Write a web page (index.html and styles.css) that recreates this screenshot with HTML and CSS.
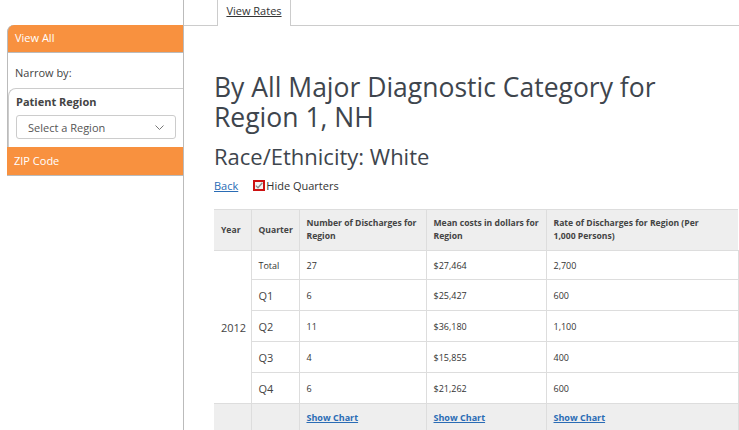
FILE: index.html
```html
<!DOCTYPE html>
<html lang="en">
<head>
<meta charset="utf-8">
<title>View Rates</title>
<link rel="stylesheet" href="styles.css">
</head>
<body>
<div class="page">
  <aside class="sidebar">
    <div class="side-box">
      <div class="bar bar-top">View All</div>
      <div class="narrow">Narrow by:</div>
      <div class="filter">
        <div class="filter-title">Patient Region</div>
        <div class="select">
          <span>Select a Region</span>
          <svg class="chev" width="9" height="5" viewBox="0 0 9 5"><path d="M0.5 0.5 L4.5 4.5 L8.5 0.5" fill="none" stroke="#777" stroke-width="1"/></svg>
        </div>
      </div>
      <div class="bar">ZIP Code</div>
    </div>
  </aside>
  <main class="main">
    <nav class="tabs">
      <a class="tab" href="#">View Rates</a>
    </nav>
    <div class="content">
      <h1>By All Major Diagnostic Category for Region 1, NH</h1>
      <h2>Race/Ethnicity: White</h2>
      <div class="controls">
        <a class="back" href="#">Back</a>
        <label class="hide">
          <span class="check"><svg width="8" height="7" viewBox="0 0 8 7"><path d="M0.8 3.6 L3 5.8 L7.4 0.8" fill="none" stroke="#8a8a8a" stroke-width="1.3"/></svg></span>
          Hide Quarters
        </label>
      </div>
      <table class="rates">
        <colgroup>
          <col class="c-year"><col class="c-q"><col class="c-n"><col class="c-m"><col class="c-r">
        </colgroup>
        <thead>
          <tr>
            <th>Year</th>
            <th>Quarter</th>
            <th>Number of Discharges for Region</th>
            <th>Mean costs in dollars for Region</th>
            <th class="th-rate">Rate of Discharges for Region (Per 1,000 Persons)</th>
          </tr>
        </thead>
        <tbody>
          <tr class="r-total">
            <td class="year" rowspan="5">2012</td>
            <td class="small">Total</td><td>27</td><td>$27,464</td><td>2,700</td>
          </tr>
          <tr><td class="q">Q1</td><td>6</td><td>$25,427</td><td>600</td></tr>
          <tr><td class="q">Q2</td><td>11</td><td>$36,180</td><td>1,100</td></tr>
          <tr><td class="q">Q3</td><td>4</td><td>$15,855</td><td>400</td></tr>
          <tr><td class="q">Q4</td><td>6</td><td>$21,262</td><td>600</td></tr>
          <tr class="charts">
            <td></td><td></td>
            <td><a href="#">Show Chart</a></td>
            <td><a href="#">Show Chart</a></td>
            <td><a href="#">Show Chart</a></td>
          </tr>
        </tbody>
      </table>
    </div>
  </main>
</div>
</body>
</html>
```
FILE: styles.css
```css
* { box-sizing: border-box; }
html, body { margin: 0; padding: 0; }
body {
  font-family: "Open Sans", "Liberation Sans", sans-serif;
  color: #444;
  background: #fff;
  width: 739px;
  height: 430px;
  overflow: hidden;
}
.page {
  display: flex;
  height: 430px;
}
.sidebar {
  width: 184px;
  flex: none;
  padding: 25px 0 0 7px;
  border-right: 1px solid #bbb;
}
.side-box {
  border-top: 1px solid #bbb;
  border-left: 1px solid #bbb;
  border-top-left-radius: 7px;
}
.bar {
  background: #f8913f;
  color: #fff;
  font-size: 11px;
  height: 29px;
  line-height: 28px;
  padding-left: 7px;
  border-bottom: 1px solid #bbb;
  margin-left: -1px;
}
.bar-top {
  height: 28px;
  line-height: 26px;
  border-top-left-radius: 7px;
  margin-top: -1px;
  margin-left: -1px;
  border-left: 1px solid #bbb;
  padding-left: 7px;
}
.narrow {
  font-size: 11px;
  color: #444;
  padding: 12px 0 0 7px;
  height: 35px;
}
.filter {
  border-top: 1px solid #ccc;
  border-left: 1px solid #ccc;
  border-top-left-radius: 8px;
  padding: 5px 7px 8px 7px;
}
.filter-title {
  font-size: 11px;
  font-weight: 700;
  color: #444;
  line-height: 16px;
  margin-bottom: 5px;
}
.select {
  height: 24px;
  border: 1px solid #ccc;
  border-radius: 3px;
  display: flex;
  align-items: center;
  justify-content: space-between;
  padding: 0 11px 0 11px;
  font-size: 11px;
  color: #555;
}
.main {
  flex: 1;
  min-width: 0;
}
.tabs {
  height: 26px;
  border-bottom: 1px solid #ccc;
  padding-left: 33px;
  display: flex;
}
.tab {
  display: block;
  width: 74px;
  height: 26px;
  background: #fff;
  border-left: 1px solid #ccc;
  border-right: 1px solid #ccc;
  text-align: center;
  font-size: 11px;
  line-height: 22px;
  color: #333;
  text-decoration: underline;
}
.content {
  padding: 46px 0 0 30px;
}
h1 {
  font-size: 26.5px;
  font-weight: 400;
  line-height: 30px;
  color: #3e454d;
  margin: 0 0 10px;
  max-width: 480px;
}
h2 {
  font-size: 22px;
  font-weight: 400;
  line-height: 28px;
  color: #3e454d;
  margin: 0 0 5px;
}
.controls {
  display: flex;
  align-items: center;
  font-size: 11px;
  height: 20px;
}
.back {
  color: #2a6cb5;
  text-decoration: underline;
  margin-right: 15px;
}
.hide {
  display: flex;
  align-items: center;
  color: #333;
}
.check {
  width: 12px;
  height: 11px;
  border: 2px solid #cc1111;
  background: #f3f3f3;
  display: flex;
  align-items: center;
  justify-content: center;
  margin-right: 1px;
}
.rates {
  margin-top: 14px;
  border-collapse: collapse;
  table-layout: fixed;
  width: 524px;
  font-size: 9px;
  color: #333;
}
.c-year { width: 37px; }
.c-q { width: 48px; }
.c-n { width: 127px; }
.c-m { width: 120px; }
.c-r { width: 192px; }
.rates th {
  background: #eee;
  font-weight: 700;
  font-size: 8.6px;
  text-align: left;
  padding: 0 3px 0 7px;
  height: 41px;
  line-height: 13px;
  border-top: 1px solid #ddd;
  border-left: 1px solid #ddd;
  vertical-align: middle;
  color: #444;
}
.rates th.th-rate { padding-right: 30px; }
.rates th:first-child { border-left: none; }
.rates td {
  border: 1px solid #ddd;
  padding: 0 7px;
  height: 31px;
  vertical-align: middle;
}
.rates tr.r-total td { height: 29px; }
.rates td.year {
  border-left: none;
  font-size: 11px;
  color: #444;
}
.rates td.q { font-size: 11px; color: #444; }
.rates tr.charts td {
  background: #eee;
  height: 28px;
  font-weight: 700;
}
.rates tr.charts td:first-child { border-left: none; }
.rates a { color: #2a6cb5; text-decoration: underline; }
```
